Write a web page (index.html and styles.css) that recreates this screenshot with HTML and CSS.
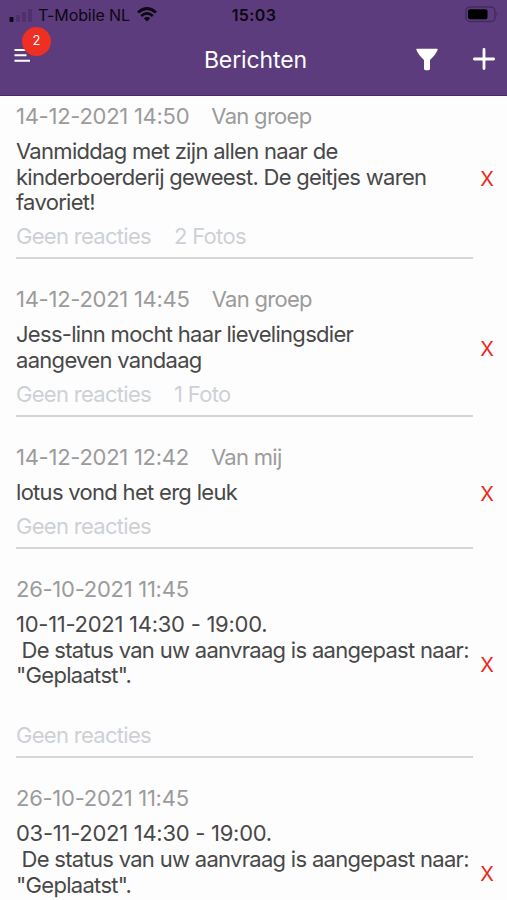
FILE: index.html
```html
<!DOCTYPE html>
<html lang="nl">
<head>
    <meta charset="utf-8">
    <title>Berichten</title>
    <link rel="stylesheet" href="styles.css">
</head>
<body>
    <header class="header">
        <div class="status-bar">
            <div class="carrier">
                <svg class="signal" width="24" height="14" viewBox="0 0 24 14">
                    <rect x="0.5" y="9" width="4" height="5" rx="1" fill="#0d0714"/>
                    <g fill="#4d306c">
                        <rect x="7" y="7" width="4" height="7" rx="1"/>
                        <rect x="13" y="4" width="4" height="10" rx="1"/>
                        <rect x="19" y="1" width="4" height="13" rx="1"/>
                    </g>
                </svg>
                <span class="carrier-name">T-Mobile NL</span>
                <svg class="wifi" width="20" height="15" viewBox="0 0 20 15" fill="none" stroke="#0d0714" stroke-width="2.8">
                    <path d="M1 5.5Q10 -2.5 19 5.5"/>
                    <path d="M4.2 9Q10 3.8 15.8 9"/>
                    <path d="M10 14.5L6.8 11.3Q10 8.6 13.2 11.3Z" fill="#0d0714" stroke="none"/>
                </svg>
            </div>
            <span class="time">15:03</span>
            <svg class="battery" width="34" height="17" viewBox="0 0 34 17">
                <rect x="1" y="1" width="29" height="14.5" rx="4" fill="none" stroke="#432a60" stroke-width="1.5"/>
                <rect x="3" y="3.3" width="19.5" height="10" rx="2" fill="#000"/>
                <path d="M31.5 5.5Q33.5 8 31.5 10.5Z" fill="#432a60"/>
            </svg>
        </div>
        <div class="nav-bar">
            <div class="menu">
                <svg width="17" height="15" viewBox="0 0 17 15" stroke="#fff" stroke-width="2">
                    <path d="M0.5 2H12M0.5 7.3H12.5M0.5 12.8H16"/>
                </svg>
                <span class="badge">2</span>
            </div>
            <h1 class="title">Berichten</h1>
            <div class="actions">
                <svg width="22" height="23" viewBox="0 0 22 23" fill="#fff">
                    <path d="M1 0.7H21Q22 0.7 21.6 1.8Q20 6.5 14 12V20.5Q14 22.3 12.5 22.3H9.5Q8 22.3 8 20.5V12Q2 6.5 0.4 1.8Q0 0.7 1 0.7Z"/>
                </svg>
                <svg width="22" height="22" viewBox="0 0 22 22" stroke="#fff" stroke-width="2.8" stroke-linecap="round">
                    <path d="M11 1.4V20.6M1.4 11H20.6"/>
                </svg>
            </div>
        </div>
    </header>

    <main class="messages">
        <article class="message">
            <div class="content">
                <div class="info"><span class="date">14-12-2021 14:50</span><span class="from">Van groep</span></div>
                <p class="text">Vanmiddag met zijn allen naar de
kinderboerderij geweest. De geitjes waren
favoriet!</p>
                <div class="meta"><span>Geen reacties</span><span>2 Fotos</span></div>
            </div>
            <span class="delete">X</span>
        </article>
        <article class="message">
            <div class="content">
                <div class="info"><span class="date">14-12-2021 14:45</span><span class="from">Van groep</span></div>
                <p class="text">Jess-linn mocht haar lievelingsdier
aangeven vandaag</p>
                <div class="meta"><span>Geen reacties</span><span>1 Foto</span></div>
            </div>
            <span class="delete">X</span>
        </article>
        <article class="message">
            <div class="content">
                <div class="info"><span class="date">14-12-2021 12:42</span><span class="from">Van mij</span></div>
                <p class="text">lotus vond het erg leuk</p>
                <div class="meta"><span>Geen reacties</span></div>
            </div>
            <span class="delete">X</span>
        </article>
        <article class="message">
            <div class="content">
                <div class="info"><span class="date">26-10-2021 11:45</span></div>
                <p class="text"><span class="date">10-11-2021 14:30 - 19:00.</span>
 De status van uw aanvraag is aangepast naar:
"Geplaatst".
<br></p>
                <div class="meta"><span>Geen reacties</span></div>
            </div>
            <span class="delete">X</span>
        </article>
        <article class="message">
            <div class="content">
                <div class="info"><span class="date">26-10-2021 11:45</span></div>
                <p class="text"><span class="date">03-11-2021 14:30 - 19:00.</span>
 De status van uw aanvraag is aangepast naar:
"Geplaatst".
<br></p>
                <div class="meta"><span>Geen reacties</span></div>
            </div>
            <span class="delete">X</span>
        </article>
    </main>
</body>
</html>
```

FILE: styles.css
```css
* {
    box-sizing: border-box;
}
body {
    margin: 0;
    height: 900px;
    overflow: hidden;
    display: flex;
    flex-direction: column;
    background-color: #fdfdfd;
    font-family: Inter, "Liberation Sans", sans-serif;
}
svg {
    display: block;
}
.header {
    height: 96px;
    flex-shrink: 0;
    background-color: #5c3c7c;
    border-bottom: 1px solid #48286a;
}
.status-bar {
    display: grid;
    grid-template-columns: 1fr auto 1fr;
    align-items: center;
    height: 29px;
    padding: 0 8px 0 9px;
    color: #0d0714;
}
.carrier {
    display: flex;
    align-items: center;
}
.carrier-name {
    margin: 0 7px 0 5px;
    font-size: 16px;
    letter-spacing: -0.1px;
    white-space: nowrap;
}
.time {
    font-size: 16px;
    font-weight: 600;
    letter-spacing: 0.4px;
}
.battery {
    justify-self: end;
}
.nav-bar {
    display: grid;
    grid-template-columns: 1fr auto 1fr;
    align-items: center;
    height: 60px;
    padding: 0 12px 0 14px;
    color: #fff;
}
.menu {
    position: relative;
    width: 17px;
    margin-bottom: 7px;
}
.badge {
    position: absolute;
    left: 8px;
    top: -21px;
    width: 29px;
    height: 29px;
    border-radius: 50%;
    background-color: #ed2f24;
    font-size: 13px;
    line-height: 27px;
    text-align: center;
}
.title {
    margin: 2px 0 0 2px;
    font-size: 23px;
    font-weight: 400;
    letter-spacing: -0.1px;
}
.actions {
    display: flex;
    justify-content: flex-end;
    align-items: center;
    gap: 35px;
}
.messages {
    flex: 1;
    min-height: 0;
    overflow: hidden;
    padding: 2px 0 0 16px;
}
.message {
    display: flex;
    align-items: center;
    margin-bottom: 22.1px;
}
.content {
    width: 457px;
    padding: 5px 0 8.2px;
    border-bottom: 2px solid #d6d6da;
    font-size: 22px;
    line-height: 26px;
    letter-spacing: -0.7px;
}
.info {
    display: flex;
    gap: 22px;
    color: #9b9b9b;
}
.date {
    letter-spacing: -0.27px;
}
.text {
    margin: 10px 0 7px;
    color: #484848;
    line-height: 25.7px;
    white-space: pre;
}
.meta {
    display: flex;
    gap: 23px;
    color: #cdd1d6;
}
.delete {
    width: 28px;
    color: #e8291c;
    font-size: 20px;
    text-align: center;
}
```
